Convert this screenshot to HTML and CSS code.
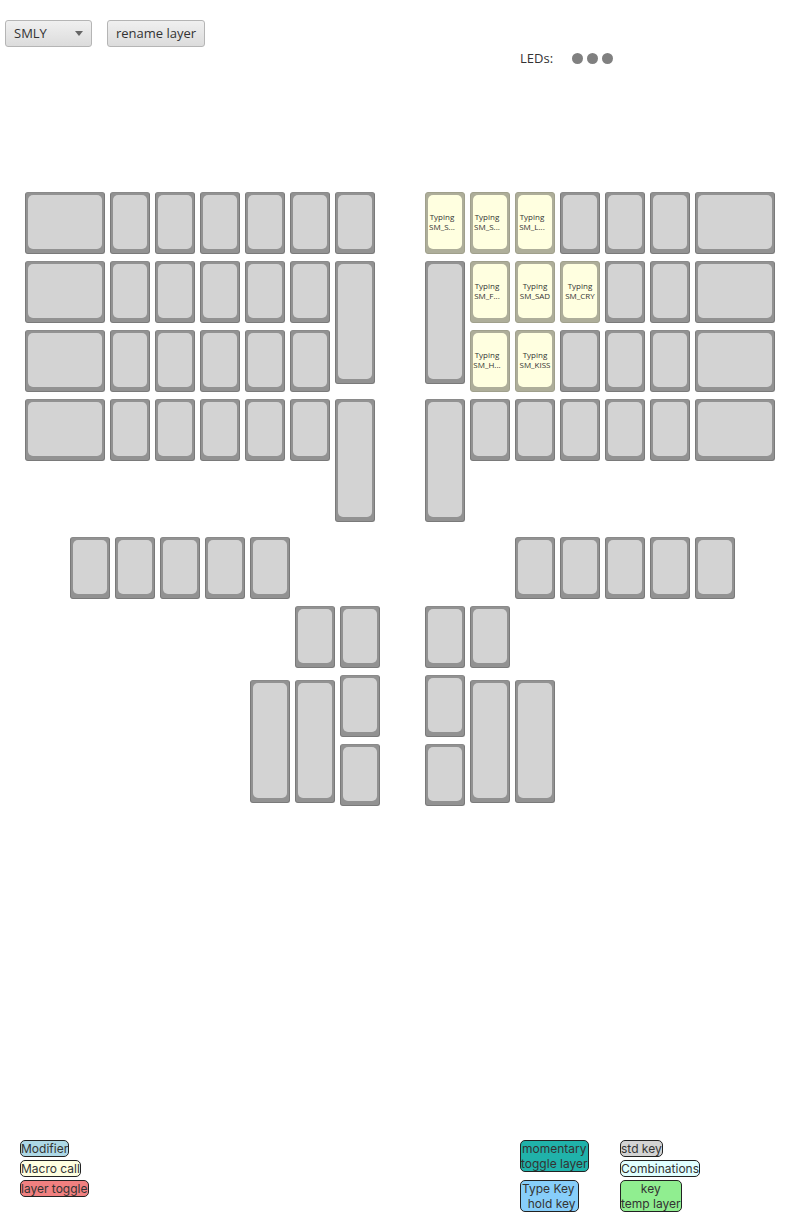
FILE: index.html

```html
<!DOCTYPE html>
<html lang="en">
<head>
    <meta charset="UTF-8">
    <title>Layer editor</title>
    <link rel="stylesheet" href="styles.css">
</head>
<body>

    <div class="toolbar">
        <button class="btn layer-select">SMLY<span class="arrow"></span></button>
        <button class="btn">rename layer</button>
    </div>

    <div class="leds">
        <span class="leds-label">LEDs:</span>
        <span class="led"></span>
        <span class="led"></span>
        <span class="led"></span>
    </div>

    <div class="keyboard" id="keyboard"></div>

    <div class="legend">
        <div class="legend-col legend-left">
            <span class="tag modifier">Modifier</span>
            <span class="tag macro">Macro call</span>
            <span class="tag toggle">layer toggle</span>
        </div>
        <div class="legend-col legend-mid">
            <span class="tag momentary">momentary<br>toggle layer</span>
            <span class="tag typekey">Type Key<br>&nbsp;&nbsp;hold key</span>
        </div>
        <div class="legend-col legend-right">
            <span class="tag std">std key</span>
            <span class="tag combo">Combinations</span>
            <span class="tag temp">key<br>temp layer</span>
        </div>
    </div>

    <script src="keys.js"></script>

</body>
</html>
```

FILE: styles.css

```css
body {
    font-family: "Open Sans", Arial, sans-serif;
    margin: 0;
    width: 800px;
    height: 1213px;
    background: white;
    color: #333;
    overflow: hidden;
}
.toolbar {
    display: flex;
    gap: 15px;
    padding: 20px 0 0 5px;
}
.btn {
    box-sizing: border-box;
    height: 27px;
    padding: 0 8px 2px;
    font-family: inherit;
    font-size: 13px;
    color: #333;
    background: linear-gradient(#f0f0f0, #dcdcdc);
    border: 1px solid #b5b5b5;
    border-radius: 3px;
}
.layer-select {
    width: 87px;
    display: flex;
    align-items: center;
    justify-content: space-between;
}
.arrow {
    margin-top: 2px;
    border-left: 4.5px solid transparent;
    border-right: 4.5px solid transparent;
    border-top: 5px solid #666;
}
.leds {
    display: flex;
    align-items: center;
    gap: 4px;
    height: 16px;
    padding: 3px 0 1px 520px;
    font-size: 13px;
}
.leds-label {
    width: 48px;
}
.led {
    width: 11px;
    height: 11px;
    margin-top: 1px;
    border-radius: 50%;
    background: #808080;
}
.keyboard {
    display: grid;
    grid-template-columns: repeat(160, 5px);
    grid-template-rows: repeat(630, 1px);
    margin-top: 125px;
    height: 630px;
}
.key {
    box-sizing: border-box;
    padding: 2px 2px 4px;
    background: #929292;
    border: 1px solid #7a7a7a;
    border-top-color: #8a8a8a;
    border-radius: 3px;
}
.key-face {
    box-sizing: border-box;
    height: 100%;
    background: #d3d3d3;
    border-radius: 5px;
}
.key.typing {
    background: #aeae9a;
    border-color: #a0a08c;
}
.key.typing .key-face {
    display: flex;
    flex-direction: column;
    justify-content: center;
    align-items: center;
    background: #ffffe0;
    font-size: 8px;
    line-height: 10px;
    color: #333;
    white-space: nowrap;
}
.key.typing.clipped .key-face {
    padding-right: 6px;
}
.legend {
    display: grid;
    grid-template-columns: 500px 100px 1fr;
    padding: 318px 0 0 20px;
    font-family: Inter, Arial, sans-serif;
}
.legend-col {
    display: flex;
    flex-direction: column;
    align-items: flex-start;
    gap: 3px;
}
.legend-mid {
    gap: 8px;
}
.tag {
    box-sizing: border-box;
    font-size: 12px;
    line-height: 15px;
    text-align: center;
    color: #333;
    border: 1px solid #222;
    border-radius: 5px;
}
.modifier { background: #add8e6; }
.macro { background: #ffffe0; }
.toggle { background: #f08080; }
.momentary { background: #20b2aa; }
.typekey { background: #87cefa; padding-right: 2px; }
.std { background: #d3d3d3; }
.combo { background: #e0ffff; }
.temp { background: #90ee90; }
```

FILE: keys.js

```js
// x, y, width, height in px, relative to the keyboard top left
var keys = [];

function addRow(xs, y, h) {
    xs.forEach(function (x) {
        keys.push({ x: x, y: y, w: 40, h: h || 62 });
    });
}

var left = [110, 155, 200, 245, 290];
var right = [470, 515, 560, 605, 650];

[0, 69, 138, 207].forEach(function (y) {
    keys.push({ x: 25, y: y, w: 80, h: 62 });
    addRow(left, y);
    keys.push({ x: 695, y: y, w: 80, h: 62 });
    addRow(right, y);
});

addRow([335, 425], 0);
addRow([335, 425], 69, 123);
addRow([335, 425], 207, 123);

addRow([70, 115, 160, 205, 250, 515, 560, 605, 650, 695], 345);
addRow([295, 340, 425, 470], 414);
addRow([340, 425], 483);
addRow([340, 425], 552);
addRow([250, 295, 470, 515], 488, 123);

var labels = {
    "425,0": "SM_S...", "470,0": "SM_S...", "515,0": "SM_L...",
    "470,69": "SM_F...", "515,69": "SM_SAD", "560,69": "SM_CRY",
    "470,138": "SM_H...", "515,138": "SM_KISS"
};

var board = document.getElementById("keyboard");
keys.forEach(function (k) {
    var key = document.createElement("div");
    var face = document.createElement("div");
    var label = labels[k.x + "," + k.y];
    key.className = "key";
    face.className = "key-face";
    key.style.gridColumn = (k.x / 5 + 1) + " / span " + (k.w / 5);
    key.style.gridRow = (k.y + 1) + " / span " + k.h;
    if (label) {
        key.classList.add("typing");
        if (label.indexOf("...") > 0) {
            key.classList.add("clipped");
        }
        face.innerHTML = "<span>Typing</span><span>" + label + "</span>";
    }
    key.appendChild(face);
    board.appendChild(key);
});
```
